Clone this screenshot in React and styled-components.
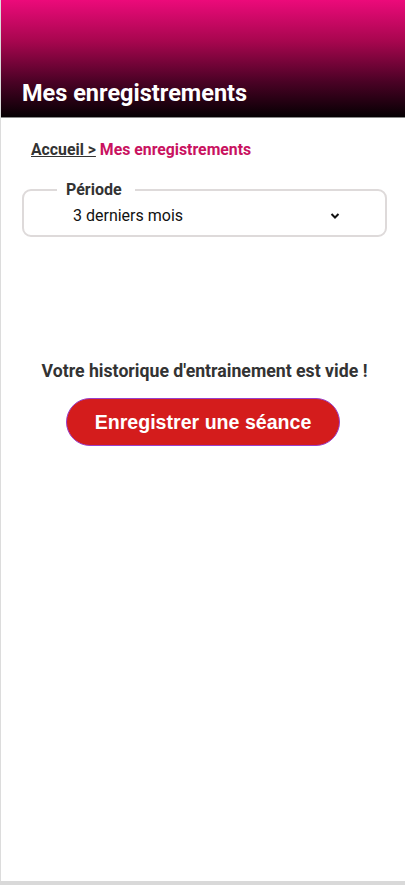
import React from 'react'
import styled, { createGlobalStyle } from 'styled-components'

const GlobalStyle = createGlobalStyle`
  body {
    margin: 0;
    background: #d9d9d9;
    font-family: Roboto, "Liberation Sans", sans-serif;
  }
`

export default function App() {
  return (
    <>
      <GlobalStyle />
      <Page>
        <Header>
          <Title>Mes enregistrements</Title>
        </Header>
        <Content>
          <Breadcrumb>
            <HomeLink href="#">Accueil &gt;</HomeLink> <Current>Mes enregistrements</Current>
          </Breadcrumb>

          <Field>
            <Legend>Période</Legend>
            <SelectRow>
              <span>3 derniers mois</span>
              <svg width="12" height="12" viewBox="0 0 12 12">
                <path d="M2.5 4 L6 7.5 L9.5 4" fill="none" stroke="#111" strokeWidth="2" />
              </svg>
            </SelectRow>
          </Field>

          <Empty>
            <EmptyText>Votre historique d'entrainement est vide !</EmptyText>
            <RecordButton>Enregistrer une séance</RecordButton>
          </Empty>
        </Content>
      </Page>
    </>
  )
}

const Page = styled.div`
  background: #fff;
  border-left: 1px solid #dcdcdc;
  min-height: 881px;
  box-sizing: border-box;
`
const Header = styled.header`
  height: 118px;
  border-bottom: 1px solid #8a8a8a;
  background: linear-gradient(to bottom, #ec0a7a 0%, #a8064f 35%, #4a0225 70%, #060003 100%);
  display: flex;
  align-items: flex-end;
  padding: 0 0 9px 21px;
  box-sizing: border-box;
`
const Title = styled.h1`
  margin: 0;
  color: #fff;
  font-size: 23.5px;
  font-weight: 700;
  line-height: 30px;
`
const Content = styled.main`
  padding: 22px 18px 0 21px;
`
const Breadcrumb = styled.div`
  font-size: 15.8px;
  font-weight: 700;
  padding-left: 9px;
  line-height: 20px;
`
const HomeLink = styled.a`
  color: #333;
  text-decoration: underline;
`
const Current = styled.span`
  color: #c9125f;
`
const Field = styled.fieldset`
  margin: 20px 0 0;
  border: 2px solid #dedada;
  border-radius: 9px;
  padding: 7px 44px 0 49px;
  height: 57px;
  box-sizing: border-box;
`
const Legend = styled.legend`
  margin-left: -16px;
  padding: 0 13px 0 9px;
  font-size: 16px;
  font-weight: 700;
  color: #333;
`
const SelectRow = styled.div`
  display: flex;
  justify-content: space-between;
  align-items: center;
  font-size: 16px;
  color: #111;
  line-height: 20px;
`
const Empty = styled.section`
  display: flex;
  flex-direction: column;
  align-items: center;
  margin-top: 122px;
`
const EmptyText = styled.p`
  margin: 0;
  font-size: 17.7px;
  font-weight: 700;
  color: #333;
  line-height: 24px;
`
const RecordButton = styled.button`
  margin: 15px 3px 0 0;
  width: 274px;
  height: 48px;
  border-radius: 24px;
  border: 1px solid #9b3fc8;
  background: #d41c1c;
  color: #fff;
  font-family: "Liberation Sans", Arial, sans-serif;
  font-size: 19.6px;
  font-weight: 700;
  cursor: pointer;
`
